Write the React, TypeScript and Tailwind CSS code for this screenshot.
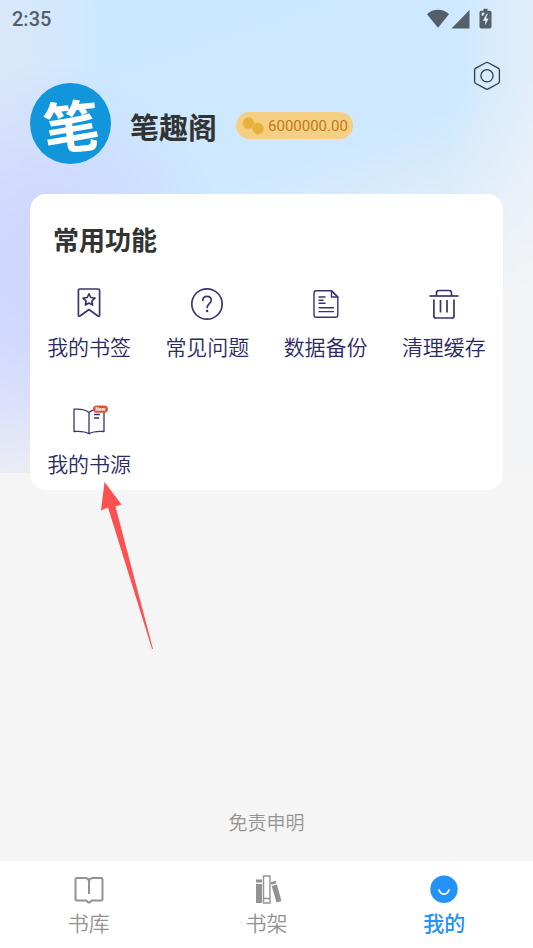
import type { ReactNode } from "react";

function StatusBar() {
  return (
    <div className="flex h-[38px] items-center justify-between pr-10 pl-3 text-[#53606a]">
      <span className="font-[Roboto,sans-serif] text-[20px] leading-6 font-medium">2:35</span>
      <div className="flex items-center">
        <svg width="66" height="22" viewBox="0 0 66 22" fill="currentColor" aria-hidden="true">
          <path d="M0 6.200C3 3.200 7 1.800 11 1.800S19 3.200 22 6.200L11 19.800Z" />
          <path d="M42.500 2V20.500H24.500Z" />
          <path d="M56.500 .8h4v2h2.300q1.700 0 1.700 1.700V18.700q0 1.700-1.700 1.700H54.200q-1.700 0-1.700-1.700V4.500q0-1.700 1.700-1.700H56.500Z" />
          <path d="M59.800 5.700L55.800 12.700h2.500v4.500l3.200-6.800h-2.500l1.800-4.700Z" fill="#dbeefd" />
          <path d="M54.700 4.700h3l-1.500 3h-1.500Z" fill="#dbeefd" />
        </svg>
      </div>
    </div>
  );
}

function SettingsIcon() {
  return (
    <svg width="28" height="30" viewBox="0 0 28 30" fill="none" stroke="#2f3d48" strokeWidth="1.300" aria-hidden="true">
      <path d="M12.800 1.700q1.200-.7 2.400 0l10 5.400q1.200.7 1.200 2v11.400q0 1.300-1.200 2l-10 5.400q-1.200.7-2.400 0l-10-5.400q-1.200-.7-1.200-2V9.100q0-1.300 1.200-2Z" />
      <circle cx="14" cy="14.800" r="6.100" />
    </svg>
  );
}

function Header() {
  return (
    <header className="flex items-start justify-between pr-8 pl-[30px] pt-[23px]">
      <div className="flex items-center gap-[19px] pt-[22px]">
        <div className="flex size-[81px] items-center justify-center rounded-full bg-[#1296db]">
          <span className="-rotate-6 text-[56px] leading-none font-bold text-white">笔</span>
        </div>
        <div className="flex items-center gap-[19px] pt-1">
          <h1 className="text-[29px] leading-9 font-bold text-[#333]">笔趣阁</h1>
          <div className="flex h-[27px] items-center gap-1 rounded-full bg-[#f5cf84] pr-[5px] pl-1.5">
            <svg width="22" height="20" viewBox="0 0 22 20" aria-hidden="true">
              <g fill="#e5b13c" stroke="#f0bf55">
                <circle cx="6.500" cy="7.200" r="5.700" />
                <circle cx="16" cy="12.500" r="5.700" />
              </g>
            </svg>
            <span className="font-[Roboto,sans-serif] text-[15px] leading-5 text-[#c07a16]">6000000.00</span>
          </div>
        </div>
      </div>
      <button type="button" aria-label="设置">
        <SettingsIcon />
      </button>
    </header>
  );
}

function FeatureIcon({ children }: { children: ReactNode }) {
  return (
    <svg className="overflow-visible" width="36" height="36" viewBox="0 0 36 36" fill="none" stroke="#38356f" strokeWidth="1.700" strokeLinejoin="round" aria-hidden="true">
      {children}
    </svg>
  );
}

function Feature({ label, icon, children }: { label: string; icon: ReactNode; children?: ReactNode }) {
  return (
    <button type="button" className="relative flex flex-col items-center gap-[11px]">
      <FeatureIcon>{icon}</FeatureIcon>
      <span className="text-[21px] leading-7 font-[350] whitespace-nowrap text-[#2b2964]">{label}</span>
      {children}
    </button>
  );
}

const bookmark = (
  <>
    <path d="M9 4H27q1.600 0 1.600 1.600V30q0 1.800-1.700 1L18 24.500 9 31q-1.600.8-1.600-1V5.600Q7.400 4 9 4Z" />
    <path d="M18 8.800l1.800 3.700 4.100.6-3 2.900.7 4.100-3.600-2-3.600 2 .7-4.100-3-2.900 4.100-.6Z" />
  </>
);

const question = (
  <>
    <circle cx="18" cy="19" r="15.200" />
    <path d="M13.800 15.500C13.800 12.800 15.500 11.300 18 11.300s4.300 1.500 4.300 3.900c0 3.200-4.200 3.600-4.200 7.300" strokeLinecap="round" />
    <circle cx="18.100" cy="26" r="1.300" fill="#38356f" stroke="none" />
  </>
);

const documentIcon = (
  <>
    <path d="M8 5.800H23.500L29.800 12V30q0 2.200-2.200 2.200H8q-2 0-2-2.200V8Q6 5.800 8 5.800Z" strokeWidth="1.400" />
    <path d="M23.500 5.800V12H29.800Z" strokeWidth="1.400" />
    <path d="M10.500 12h7M10.500 15.200h5M10.500 18.300h7M10.500 22.800h15.500M10.500 26.600h15.500" strokeWidth="1.400" />
  </>
);

const trash = (
  <>
    <path d="M3.500 11H32.500" />
    <path d="M10.500 11V8q0-2.500 2.500-2.500H23q2.500 0 2.500 2.500V11" />
    <path d="M7.900 14.500V31q0 2 2 2H26q2 0 2-2V14.500M14.500 15v12.500M21 15v12.500" />
  </>
);

const bookSource = (
  <>
    <path d="M18 10.500C14 7.200 8 6.800 3 7.200V29.500c6-.4 11-.2 15 2.300 4-2.500 9-2.700 15-2.300V10M18 10.500V31.800M18 10.500c1.500-1.200 3-2 5-2.600" strokeWidth="1.300" />
    <path d="M23 12.500h6M23 16h5" strokeWidth="1.300" />
    <rect x="22" y="3.500" width="15" height="7.200" rx="3.600" fill="#df5237" stroke="none" />
    <text x="29.500" y="8.800" textAnchor="middle" fontFamily="Roboto, sans-serif" fontSize="5" fontWeight="700" fill="#fff" stroke="none">
      New
    </text>
  </>
);

function Pointer() {
  return (
    <svg className="pointer-events-none absolute top-20 left-[70px]" width="53" height="168" viewBox="0 0 53 168" aria-hidden="true">
      <path d="M4.500 0L21.500 22.500 15.500 24.500 53 167 52 167 8 25.500 1 28.500Z" fill="#fc5151" />
    </svg>
  );
}

function FeatureCard() {
  return (
    <section className="mx-[30px] mt-[30px] rounded-2xl bg-white pt-[29px] pb-[13px]">
      <h2 className="pl-[23px] text-[26px] leading-8 font-bold text-[#333]">常用功能</h2>
      <div className="mt-[30px] grid grid-cols-4 gap-y-[42px]">
        <Feature label="我的书签" icon={bookmark} />
        <Feature label="常见问题" icon={question} />
        <Feature label="数据备份" icon={documentIcon} />
        <Feature label="清理缓存" icon={trash} />
        <Feature label="我的书源" icon={bookSource}>
          <Pointer />
        </Feature>
      </div>
    </section>
  );
}

function Tab({ label, active, children }: { label: string; active?: boolean; children: ReactNode }) {
  return (
    <a
      href="#"
      aria-current={active ? "page" : undefined}
      className={`flex flex-col items-center gap-[3px] ${active ? "font-medium text-[#2492f8]" : "font-[350] text-[#929292]"}`}
    >
      <svg width="32" height="32" viewBox="0 0 32 32" fill="none" stroke="currentColor" strokeWidth="2" aria-hidden="true">
        {children}
      </svg>
      <span className="text-[21px] leading-7">{label}</span>
    </a>
  );
}

function TabBar() {
  return (
    <nav className="grid grid-cols-3 bg-white pt-3 pb-3">
      <Tab label="书库">
        <path d="M16 7.500C15 5.500 13.500 5 12 5H4Q2.500 5 2.500 6.500V26Q2.500 27.500 4 27.500H13C14 27.500 14.500 29.500 16 29.500S18 27.500 19 27.500H28Q29.500 27.500 29.500 26V6.500Q29.500 5 28 5H20C18.500 5 17 5.500 16 7.500ZM16 7.500V21" strokeLinejoin="round" />
      </Tab>
      <Tab label="书架">
        <path d="M6 6.500h6v3H6ZM6 11h6v19H6Z" fill="currentColor" stroke="none" />
        <path d="M13.500 3h6.500v27h-6.500ZM13.500 25.500h6.500" strokeWidth="1.400" />
        <path d="M20.600 9.200l5-1.500.8 2.600-5 1.500ZM21.700 13l5.200-1.600L31.500 28l-5 1.500Z" fill="currentColor" stroke="none" />
      </Tab>
      <Tab label="我的" active>
        <circle cx="16" cy="16.300" r="13.700" fill="#2492f8" stroke="none" />
        <path d="M11 17C12 19.800 13.800 21.100 16 21.100S20 19.800 21 17" stroke="#fff" strokeWidth="1.800" strokeLinecap="round" />
      </Tab>
    </nav>
  );
}

export default function App() {
  return (
    <div className="flex min-h-screen flex-col bg-[#f5f5f5] bg-[radial-gradient(ellipse_36%_45%_at_7%_58%,#cfd5fe_0%,#cfd5fed0_35%,#cfd5fe00_100%),linear-gradient(to_right,#e6e8f488_0%,#e6e8f400_18%,#f2f4f600_84%,#f2f4f688_100%),linear-gradient(160deg,#cce8ff_0%,#cde8ff_40%,#e4eef8_59%,#f3f4f5_72%,#f3f4f5_100%)] bg-[length:100%_473px] bg-no-repeat font-['Noto_Sans_CJK_SC',sans-serif]">
      <StatusBar />
      <main className="flex grow flex-col">
        <Header />
        <FeatureCard />
        <a href="#" className="mt-auto mb-[25px] self-center text-[19px] leading-7 font-[350] text-[#949494]">
          免责申明
        </a>
      </main>
      <TabBar />
    </div>
  );
}
